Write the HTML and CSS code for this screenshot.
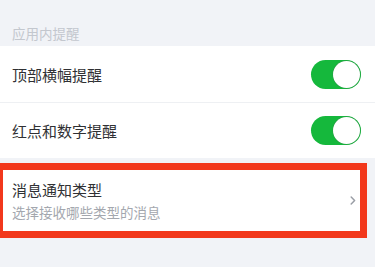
FILE: index.html
```html
<!DOCTYPE html>
<html lang="zh">
<head>
<meta charset="utf-8">
<link rel="stylesheet" href="styles.css">
</head>
<body>
<div class="page">
  <div class="section-title">应用内提醒</div>
  <div class="group">
    <div class="row row-divided">
      <span class="label">顶部横幅提醒</span>
      <span class="toggle"><span class="knob"></span></span>
    </div>
    <div class="row">
      <span class="label">红点和数字提醒</span>
      <span class="toggle"><span class="knob"></span></span>
    </div>
  </div>
  <div class="highlight">
    <div class="nav-row">
      <div class="nav-text">
        <div class="nav-title">消息通知类型</div>
        <div class="nav-sub">选择接收哪些类型的消息</div>
      </div>
      <svg class="chevron" width="6" height="9" viewBox="0 0 6 9"><path d="M1.2 1 L4.6 4.5 L1.2 8" fill="none" stroke="#9a9ea6" stroke-width="1.5" stroke-linecap="round" stroke-linejoin="round"/></svg>
    </div>
  </div>
</div>
</body>
</html>
```
FILE: styles.css
```css
html, body {
  margin: 0;
  padding: 0;
  background: #f1f3f7;
}
body {
  width: 375px;
  height: 267px;
  overflow: hidden;
  font-family: "Noto Sans CJK SC", "Noto Sans", sans-serif;
}
.page {
  display: flex;
  flex-direction: column;
}
.section-title {
  height: 46px;
  box-sizing: border-box;
  padding: 24px 0 0 12px;
  font-size: 13.5px;
  line-height: 18px;
  color: #c3c7ce;
}
.group {
  background: #fff;
}
.row {
  height: 55px;
  display: flex;
  align-items: center;
  justify-content: space-between;
  padding: 0 14px 0 12px;
}
.row-divided {
  border-bottom: 1px solid #eef0f3;
  height: 56px;
}
.label {
  font-size: 15px;
  color: #2f3033;
}
.toggle {
  width: 50px;
  height: 29px;
  box-sizing: border-box;
  border-radius: 15px;
  background: #15b83c;
  display: flex;
  justify-content: flex-end;
  align-items: center;
  padding: 1px;
}
.knob {
  width: 27px;
  height: 27px;
  border-radius: 50%;
  background: #fff;
  box-shadow: 0 0 0 0.5px #2a9a46;
}
.highlight {
  margin: 5px 0 0 -4px;
  width: 371px;
  box-sizing: border-box;
  border: 7px solid #f2381c;
  background: #fff;
}
.nav-row {
  height: 61px;
  display: flex;
  align-items: center;
  justify-content: space-between;
  padding: 0 4px 0 9px;
}
.nav-title {
  font-size: 15px;
  line-height: 22px;
  color: #2f3033;
}
.nav-sub {
  font-size: 13.5px;
  line-height: 20px;
  color: #a3a7ae;
  margin-top: 1px;
}
.chevron {
  display: block;
}
```
